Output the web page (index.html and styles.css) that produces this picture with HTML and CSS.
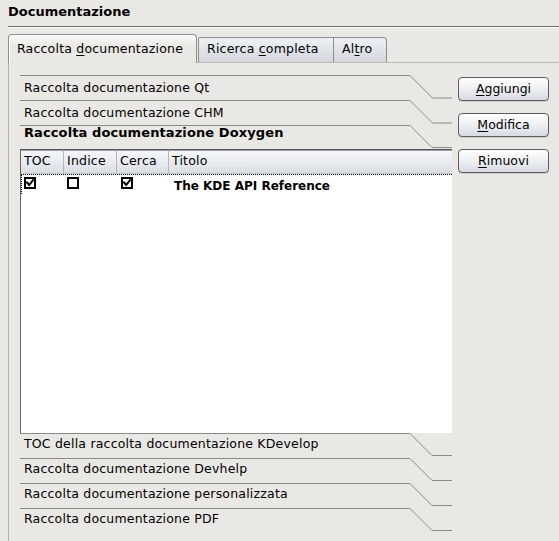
FILE: index.html
```html
<!DOCTYPE html>
<html>
<head>
<meta charset="utf-8">
<link rel="stylesheet" href="styles.css">
</head>
<body>
<div class="page">
  <div class="title">Documentazione</div>
  <div class="tabs">
    <div class="tab active">Raccolta <u>d</u>ocumentazione</div>
    <div class="tab mid">Ricerca <u>c</u>ompleta</div>
    <div class="tab last">Al<u>t</u>ro</div>
  </div>
  <div class="panel">
    <div class="toolbox">
      <div class="hdr up"><span class="lbl">Raccolta documentazione Qt</span><svg class="notch" width="42" height="25" viewBox="0 0 42 25"><polyline points="0,0.5 22.5,23 42,23" /></svg></div>
      <div class="hdr up"><span class="lbl">Raccolta documentazione CHM</span><svg class="notch" width="42" height="25" viewBox="0 0 42 25"><polyline points="0,0.5 22.5,23 42,23" /></svg></div>
      <div class="hdr sel"><span class="lbl">Raccolta documentazione Doxygen</span><svg class="notch" width="42" height="24" viewBox="0 0 42 24"><polyline points="0,0.5 22,22.5 42,22.5" /></svg></div>
      <div class="list">
        <div class="lhead">
          <div class="hc">TOC</div>
          <div class="hc">Indice</div>
          <div class="hc">Cerca</div>
          <div class="hc last">Titolo</div>
        </div>
        <div class="lrow">
          <div class="c c1"><svg class="cb" width="12" height="12" viewBox="0 0 12 12"><rect x="1" y="1" width="10" height="10"/><path d="M3 5.5 L5.2 8 L9 3.2"/></svg></div>
          <div class="c c2"><svg class="cb" width="12" height="12" viewBox="0 0 12 12"><rect x="1" y="1" width="10" height="10"/></svg></div>
          <div class="c c3"><svg class="cb" width="12" height="12" viewBox="0 0 12 12"><rect x="1" y="1" width="10" height="10"/><path d="M3 5.5 L5.2 8 L9 3.2"/></svg></div>
          <div class="c c4">The KDE API Reference</div>
        </div>
      </div>
      <div class="hdr low"><span class="lbl">TOC della raccolta documentazione KDevelop</span><svg class="notch" width="42" height="25" viewBox="0 0 42 25"><polyline points="0,0.5 22,22.5 42,22.5" /></svg></div>
      <div class="hdr low"><span class="lbl">Raccolta documentazione Devhelp</span><svg class="notch" width="42" height="25" viewBox="0 0 42 25"><polyline points="0,0.5 22,22.5 42,22.5" /></svg></div>
      <div class="hdr low"><span class="lbl">Raccolta documentazione personalizzata</span><svg class="notch" width="42" height="25" viewBox="0 0 42 25"><polyline points="0,0.5 22,22.5 42,22.5" /></svg></div>
      <div class="hdr low"><span class="lbl">Raccolta documentazione PDF</span><svg class="notch" width="42" height="25" viewBox="0 0 42 25"><polyline points="0,0.5 22,22.5 42,22.5" /></svg></div>
    </div>
    <div class="buttons">
      <div class="btn"><u>A</u>ggiungi</div>
      <div class="btn"><u>M</u>odifica</div>
      <div class="btn"><u>R</u>imuovi</div>
    </div>
  </div>
</div>
</body>
</html>
```
FILE: styles.css
```css
html, body {
  margin: 0;
  padding: 0;
  background: #eae8e4;
  overflow: hidden;
  height: 541px;
}
body {
  font-family: "DejaVu Sans", sans-serif;
  font-size: 12.5px;
  letter-spacing: 0.2px;
  color: #000;
}
.page {
  padding-left: 8px;
}
u { text-decoration: underline; text-underline-offset: 2px; }

.title {
  font-weight: bold;
  font-size: 13px;
  letter-spacing: 0;
  line-height: 15px;
  padding-top: 4px;
  height: 22px;
  border-bottom: 1px solid #6e6e6e;
  box-shadow: 0 1px 0 #ffffff;
}

.tabs {
  display: flex;
  align-items: flex-end;
  margin-top: 7px;
  height: 28px;
}
.tab {
  box-sizing: border-box;
  padding: 3px 0 6px 8px;
  line-height: 15px;
  white-space: nowrap;
  border: 1px solid #8e8e8e;
  border-bottom: none;
  background: linear-gradient(#eef1f4, #dde1e6 60%, #d2d6dc);
  height: 25px;
}
.tab.active {
  position: relative;
  z-index: 1;
  width: 189px;
  height: 29px;
  margin-bottom: -1px;
  padding-top: 6px;
  border-radius: 4px 4px 0 0;
  background: linear-gradient(#fafaf9, #eae8e4 12px);
  box-shadow: inset 1px 1px 0 #ffffff;
  margin-right: 1px;
}
.tab.mid {
  width: 136px;
  border-radius: 2px 0 0 0;
}
.tab.last {
  width: 53px;
  border-left: none;
  border-radius: 0 4px 0 0;
}

.panel {
  display: flex;
  gap: 6px;
  border-top: 1px solid #bdbbb7;
  border-left: 1px solid #b3b1ad;
  padding: 12px 0 30px 11px;
}
.toolbox {
  width: 432px;
  flex: none;
  display: flex;
  flex-direction: column;
}
.hdr {
  display: flex;
  height: 25px;
}
.hdr .lbl {
  flex: 1;
  border-top: 1px solid #8a8a8a;
  padding-left: 4px;
  line-height: 14px;
  white-space: nowrap;
}
.hdr.up .lbl { padding-top: 5px; }
.hdr.sel { height: 24px; }
.hdr.sel .lbl { padding-top: 0; font-weight: bold; font-size: 13px; letter-spacing: 0.1px; }
.hdr.low .lbl { padding-top: 3px; }
.notch {
  flex: none;
  display: block;
}
.notch polyline {
  fill: none;
  stroke: #8a8a8a;
  stroke-width: 1;
}

.list {
  height: 284px;
  box-sizing: border-box;
  background: #ffffff;
  border-top: 1px solid #555555;
  border-left: 1px solid #666666;
}
.lhead {
  display: grid;
  grid-template-columns: 43px 53px 52px 1fr;
  height: 24px;
  box-sizing: border-box;
  border-bottom: 1px solid #c3c7cd;
  background: linear-gradient(#f6f7f9, #e9ecf0 50%, #dadee4);
  box-shadow: inset 0 1px 0 #9da0a5;
}
.hc {
  border-right: 1px solid #b3b8c0;
  padding: 4px 0 0 3px;
  line-height: 14px;
  white-space: nowrap;
}
.hc.last { border-right: none; }

.lrow {
  display: grid;
  grid-template-columns: 41px 53px 52px 1fr;
  height: 20px;
  border-top: 1px dotted #000;
  border-left: 1px dotted #000;
  padding-top: 2px;
  box-sizing: border-box;
}
.c { display: flex; align-items: flex-start; }
.c1 { padding-left: 2px; }
.c2 { padding-left: 4px; }
.c3 { padding-left: 5px; }
.c4 { padding-left: 6px; padding-top: 2px; font-weight: bold; font-size: 12px; letter-spacing: 0; line-height: 14px; white-space: nowrap; }
.cb { display: block; }
.cb rect { fill: #fff; stroke: #000; stroke-width: 2; }
.cb path { fill: none; stroke: #000; stroke-width: 2; stroke-linecap: square; }

.buttons {
  display: flex;
  flex-direction: column;
  gap: 12px;
  padding-top: 2px;
  width: 91px;
  flex: none;
}
.btn {
  height: 24px;
  box-sizing: border-box;
  border: 1px solid #5d5d5d;
  border-radius: 4px;
  background: linear-gradient(#ffffff, #f0f1f4 45%, #d6dae1);
  box-shadow: inset 0 1px 0 #ffffff, 0 1px 0 #d0cec9;
  text-align: center;
  line-height: 22px;
  letter-spacing: 0;
  white-space: nowrap;
}
```
